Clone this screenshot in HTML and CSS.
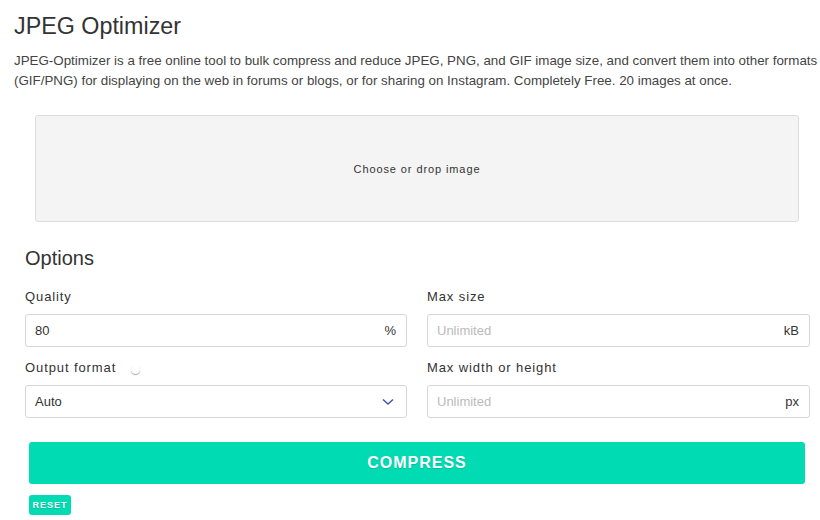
FILE: index.html
```html
<!DOCTYPE html>
<html>
<head>
<meta charset="utf-8">
<link rel="stylesheet" href="styles.css">
</head>
<body>
<div class="page">
  <h1 class="title">JPEG Optimizer</h1>
  <p class="desc">JPEG-Optimizer is a free online tool to bulk compress and reduce JPEG, PNG, and GIF image size, and convert them into other formats (GIF/PNG) for displaying on the web in forums or blogs, or for sharing on Instagram. Completely Free. 20 images at once.</p>
  <div class="drop">Choose or drop image</div>
  <div class="options">
    <h2 class="opt-title">Options</h2>
    <div class="grid">
      <div class="field">
        <div class="label">Quality</div>
        <div class="input"><span class="val">80</span><span class="unit">%</span></div>
      </div>
      <div class="field">
        <div class="label">Max size</div>
        <div class="input"><span class="ph">Unlimited</span><span class="unit">kB</span></div>
      </div>
      <div class="field">
        <div class="label">Output format <span class="dot"></span></div>
        <div class="input"><span class="val">Auto</span>
          <svg class="chev" width="12" height="8" viewBox="0 0 12 8"><path d="M1 1.5 L6 6 L11 1.5" fill="none" stroke="#3f51b5" stroke-width="1.4"/></svg>
        </div>
      </div>
      <div class="field">
        <div class="label">Max width or height</div>
        <div class="input"><span class="ph">Unlimited</span><span class="unit">px</span></div>
      </div>
    </div>
  </div>
  <div class="actions">
    <button class="compress">COMPRESS</button>
    <button class="reset">RESET</button>
  </div>
</div>
</body>
</html>
```
FILE: styles.css
```css
html, body { margin: 0; padding: 0; background: #fff; }
body { font-family: "Liberation Sans", Arial, sans-serif; color: #333; }
.page { padding: 0 0 0 14px; width: 806px; }
.title { font-size: 23.3px; font-weight: normal; margin: 0; padding-top: 12px; line-height: 28px; color: #333; }
.desc { font-size: 13.35px; line-height: 20px; margin: 11px 0 0 0; color: #444; }
.drop {
  margin: 24px 0 0 21px; width: 762px; height: 105px;
  background: #f4f4f4; border: 1px solid #dcdcdc; border-radius: 3px;
  display: flex; align-items: center; justify-content: center;
  font-size: 11px; letter-spacing: 0.9px; color: #333;
}
.options { margin-left: 11px; width: 784px; }
.opt-title { font-size: 20px; font-weight: normal; margin: 0; padding-top: 24px; line-height: 24px; color: #333; }
.grid { display: grid; grid-template-columns: 382px 383px; column-gap: 20px; row-gap: 0; margin-top: 18px; }
.field { display: flex; flex-direction: column; }
.label { font-size: 13px; letter-spacing: 0.9px; color: #333; height: 18px; line-height: 18px; margin-bottom: 8px; display: flex; align-items: center; }
.field:nth-child(3) .label, .field:nth-child(4) .label { margin-top: 12px; margin-bottom: 8px; }
.dot { display: inline-block; width: 9px; height: 9px; border-radius: 50%; background: #fff; box-shadow: 0 1px 1px rgba(0,0,0,0.35); margin-left: 15px; margin-top: 2px; }
.input {
  box-sizing: border-box; height: 33px; border: 1px solid #d6d6d6; border-radius: 3px;
  display: flex; align-items: center; justify-content: space-between;
  padding: 0 10px 0 9px; font-size: 13px; color: #333; background: #fff;
}
.ph { color: #bbb; }
.unit { color: #333; }
.chev { margin-right: 2px; }
.actions { display: flex; flex-direction: column; align-items: flex-start; margin-left: 15px; margin-top: 24px; }
.compress {
  width: 776px; height: 42px; border: none; border-radius: 3px; background: #00dbb4;
  color: #fff; font-family: "Liberation Sans", Arial, sans-serif; font-weight: bold; font-size: 16px;
  letter-spacing: 1px; text-shadow: 0 1px 1px rgba(0,0,0,0.15); padding: 0;
}
.reset {
  margin-top: 11px; width: 42px; height: 20px; border: none; border-radius: 3px; background: #00dbb4;
  color: #fff; font-family: "Liberation Sans", Arial, sans-serif; font-weight: bold; font-size: 9px;
  letter-spacing: 1px; padding: 0; text-shadow: 0 1px 1px rgba(0,0,0,0.15);
}
```
